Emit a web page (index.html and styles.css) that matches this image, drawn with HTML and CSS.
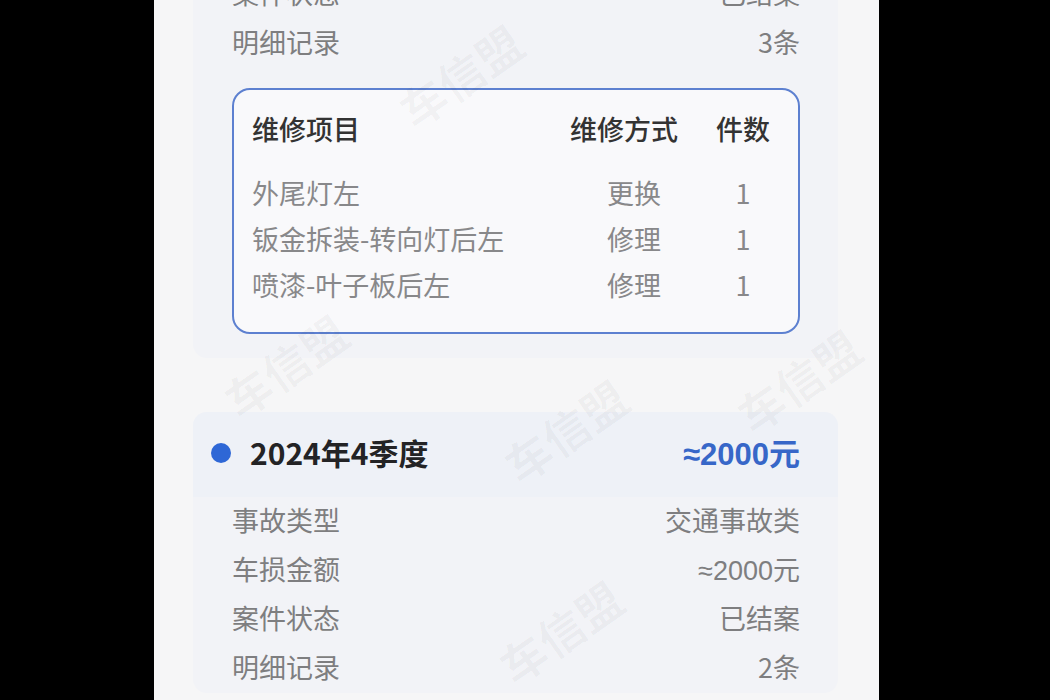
FILE: index.html
```html
<!DOCTYPE html>
<html lang="zh-CN">
<head>
  <meta charset="UTF-8">
  <title>出险记录</title>
  <link rel="stylesheet" href="styles.css">
</head>
<body>

  <div class="panel">

    <div class="card card-first">
      <div class="row"><span>案件状态</span><span>已结案</span></div>
      <div class="row"><span>明细记录</span><span>3条</span></div>

      <div class="detail-box">
        <div class="detail-row detail-head">
          <span>维修项目</span><span class="mid">维修方式</span><span class="mid">件数</span>
        </div>
        <div class="detail-row detail-first">
          <span>外尾灯左</span><span class="mid way">更换</span><span class="mid">1</span>
        </div>
        <div class="detail-row">
          <span>钣金拆装-转向灯后左</span><span class="mid way">修理</span><span class="mid">1</span>
        </div>
        <div class="detail-row">
          <span>喷漆-叶子板后左</span><span class="mid way">修理</span><span class="mid">1</span>
        </div>
      </div>
    </div>

    <div class="card">
      <div class="card-head">
        <span class="dot"></span>
        <span class="title">2024年4季度</span>
        <span class="amount money">≈2000元</span>
      </div>
      <div class="row"><span>事故类型</span><span>交通事故类</span></div>
      <div class="row"><span>车损金额</span><span class="money">≈2000元</span></div>
      <div class="row"><span>案件状态</span><span>已结案</span></div>
      <div class="row"><span>明细记录</span><span>2条</span></div>
    </div>

    <!-- watermark -->
    <span class="mark" style="left: 237px; top: 42px;">车信盟</span>
    <span class="mark" style="left: 62px; top: 332px;">车信盟</span>
    <span class="mark" style="left: 342px; top: 397px;">车信盟</span>
    <span class="mark" style="left: 575px; top: 347px;">车信盟</span>
    <span class="mark" style="left: 337px; top: 598px;">车信盟</span>
  </div>

</body>
</html>
```

FILE: styles.css
```css
html, body {
  margin: 0px;
  padding: 0px;
  background-color: #000;
  height: 100%;
  overflow: hidden;
}
body {
  font-family: "Noto Sans CJK SC", "Noto Sans", sans-serif;
}
.panel {
  position: relative;
  margin-left: 154px;
  width: 725px;
  height: 700px;
  background-color: #f6f6f7;
  padding: 0 41px 0 39px;
  box-sizing: border-box;
  overflow: hidden;
}
.card {
  background-color: #f2f3f7;
  border-radius: 14px;
}
.card-first {
  margin-top: -30px;
  padding-bottom: 24px;
  margin-bottom: 54px;
  border-radius: 0 0 14px 14px;
}
.row {
  display: flex;
  justify-content: space-between;
  align-items: center;
  height: 49px;
  box-sizing: border-box;
  padding: 0 38px 5px 39px;
  font-size: 27px;
  color: #7e7e80;
}
.money {
  font-family: "Liberation Sans", "Noto Sans CJK SC", sans-serif;
}
.detail-box {
  margin: 20px 38px 0 39px;
  border: 2px solid #5d80d0;
  border-radius: 18px;
  background-color: #f9f9fb;
  padding: 19px 27px 25px 18px;
}
.detail-row {
  display: grid;
  grid-template-columns: 1fr 120px 56px;
  column-gap: 31px;
  align-items: center;
  height: 46px;
  font-size: 27px;
  color: #88888a;
}
.detail-head {
  height: 38px;
  color: #333;
  font-weight: 500;
}
.detail-first {
  margin-top: 22px;
}
.mid {
  text-align: center;
}
.way {
  padding-left: 20px;
}
.card-head {
  display: flex;
  align-items: center;
  height: 85px;
  box-sizing: border-box;
  padding: 0 38px 6px 18px;
  background-color: #eef1f7;
  border-radius: 14px 14px 0 0;
}
.dot {
  width: 20px;
  height: 20px;
  border-radius: 50%;
  background-color: #2e67d6;
  margin-right: 19px;
  margin-top: 2px;
}
.title {
  font-size: 30px;
  font-weight: bold;
  color: #232325;
}
.amount {
  margin-left: auto;
  font-size: 31px;
  font-weight: bold;
  color: #3767c8;
}
.mark {
  position: absolute;
  font-size: 46px;
  font-weight: bold;
  color: rgba(0, 0, 0, 0.03);
  transform: rotate(-35deg);
  pointer-events: none;
  white-space: nowrap;
}
```
